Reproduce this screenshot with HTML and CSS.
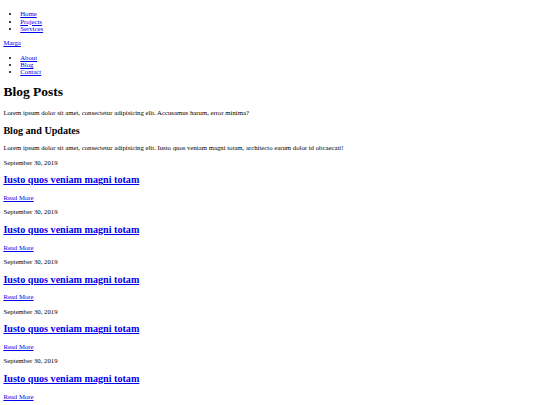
FILE: index.html
```html
<!DOCTYPE html>
<html lang="en">
<head>
<meta charset="utf-8">
<title>Blog Posts</title>
<link rel="stylesheet" href="styles.css">
</head>
<body>
<header class="site-header">
  <ul class="nav-list">
    <li><a href="#">Home</a></li>
    <li><a href="#">Projects</a></li>
    <li><a href="#">Services</a></li>
  </ul>
  <div class="brand"><a href="#">Marga</a></div>
  <ul class="nav-list">
    <li><a href="#">About</a></li>
    <li><a href="#">Blog</a></li>
    <li><a href="#">Contact</a></li>
  </ul>
</header>
<main>
  <h1>Blog Posts</h1>
  <p>Lorem ipsum dolor sit amet, consectetur adipisicing elit. Accusamus harum, error minima?</p>
  <h2>Blog and Updates</h2>
  <p>Lorem ipsum dolor sit amet, consectetur adipisicing elit. Iusto quos veniam magni totam, architecto earum dolor id obcaecati!</p>
  <article class="post">
    <p>September 30, 2019</p>
    <h2><a href="#">Iusto quos veniam magni totam</a></h2>
    <p><a href="#">Read More</a></p>
  </article>
  <article class="post">
    <p>September 30, 2019</p>
    <h2><a href="#">Iusto quos veniam magni totam</a></h2>
    <p><a href="#">Read More</a></p>
  </article>
  <article class="post">
    <p>September 30, 2019</p>
    <h2><a href="#">Iusto quos veniam magni totam</a></h2>
    <p><a href="#">Read More</a></p>
  </article>
  <article class="post">
    <p>September 30, 2019</p>
    <h2><a href="#">Iusto quos veniam magni totam</a></h2>
    <p><a href="#">Read More</a></p>
  </article>
  <article class="post">
    <p>September 30, 2019</p>
    <h2><a href="#">Iusto quos veniam magni totam</a></h2>
    <p><a href="#">Read More</a></p>
  </article>
  <article class="post">
    <p>September 30, 2019</p>
    <h2><a href="#">Iusto quos veniam magni totam</a></h2>
    <p><a href="#">Read More</a></p>
  </article>
</main>
</body>
</html>
```
FILE: styles.css
```css
html {
  background: #ffffff;
}

body {
  margin: 3.375px;
  font-family: "Liberation Serif", "Times New Roman", serif;
  font-size: 6.75px;
  line-height: 1.107;
  color: #000000;
}

a {
  color: #0000ee;
}

.nav-list {
  margin: 1em 0;
  padding-left: 2.5em;
  list-style: disc;
}

h1 {
  font-size: 2em;
  margin: 0.67em 0;
}

h2 {
  font-size: 1.5em;
  margin: 0.83em 0;
}

p {
  margin: 1em 0;
}
```
